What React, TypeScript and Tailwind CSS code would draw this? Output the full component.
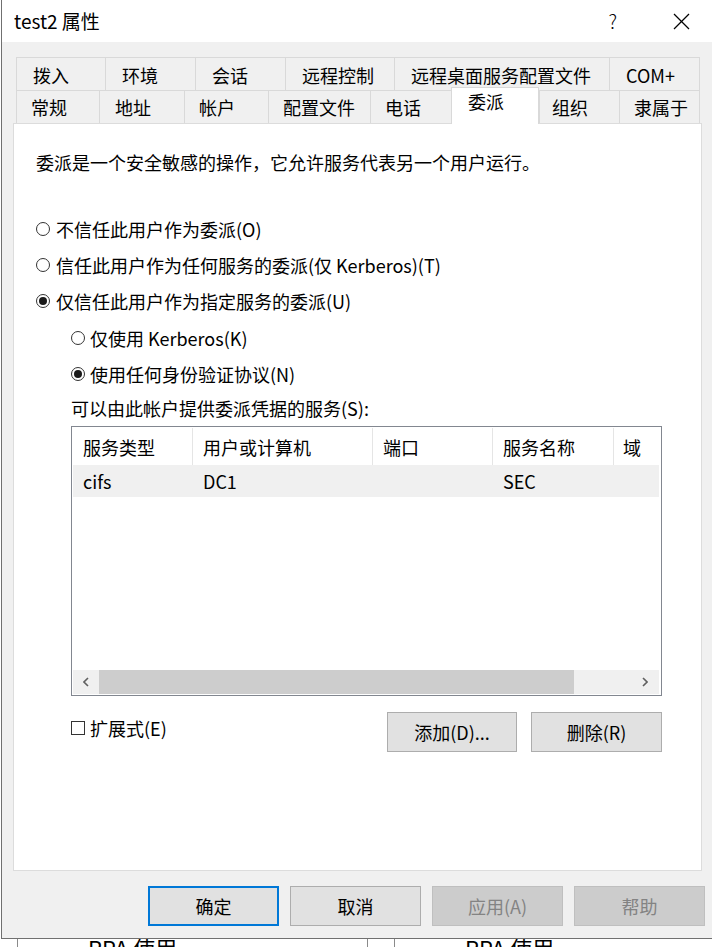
import React from "react";

const font = "font-['Noto_Sans_CJK_SC','Microsoft_YaHei',sans-serif]";

const topTabs = [
  { label: "拨入", w: "w-[89px]" },
  { label: "环境", w: "w-[90px]" },
  { label: "会话", w: "w-[90px]" },
  { label: "远程控制", w: "w-[109px]" },
  { label: "远程桌面服务配置文件", w: "w-[215px]" },
  { label: "COM+", w: "w-[91px]" },
];

const bottomTabs = [
  { label: "常规", w: "w-[83px]", pl: "pl-[14px]" },
  { label: "地址", w: "w-[85px]", pl: "pl-[15px]" },
  { label: "帐户", w: "w-[84px]", pl: "pl-[14px]" },
  { label: "配置文件", w: "w-[102px]", pl: "pl-[14px]" },
  { label: "电话", w: "w-[81px]", pl: "pl-[14px]" },
  { label: "委派", w: "w-[88px]", pl: "pl-[16px]", active: true },
  { label: "组织", w: "w-[80px]", pl: "pl-[12px]" },
  { label: "隶属于", w: "w-[81px]", pl: "pl-[14px]" },
];

function Radio({ checked }: { checked?: boolean }) {
  return (
    <span className="flex h-[14px] w-[14px] shrink-0 items-center justify-center rounded-full border border-[#333333] bg-white">
      {checked && <span className="h-[8px] w-[8px] rounded-full bg-[#1a1a1a]" />}
    </span>
  );
}

function Chevron({ dir }: { dir: "left" | "right" }) {
  return (
    <svg width="6" height="10" viewBox="0 0 6 10">
      <polyline
        points={dir === "left" ? "5,1 1,5 5,9" : "1,1 5,5 1,9"}
        fill="none"
        stroke="#606060"
        strokeWidth="1.6"
      />
    </svg>
  );
}

export default function App() {
  return (
    <div className={`h-[947px] w-[712px] overflow-hidden bg-white text-[18px] text-black ${font}`}>
      <div className="ml-px flex h-[939px] flex-col border-b border-l border-[#707070]">
        {/* title bar */}
        <div className="flex h-[42px] shrink-0 items-center bg-white pl-[12px] pr-[22px]">
          <span className="text-[19px] leading-[24px]">test2 属性</span>
          <span className="ml-auto text-[19px] font-light leading-[24px]">?</span>
          <svg className="ml-[56px]" width="17" height="17" viewBox="0 0 17 17">
            <line x1="1" y1="1" x2="16" y2="16" stroke="#000" strokeWidth="1.2" />
            <line x1="16" y1="1" x2="1" y2="16" stroke="#000" strokeWidth="1.2" />
          </svg>
        </div>

        <div className="flex flex-1 flex-col bg-[#f0f0f0] pt-[15px]">
          <div className="ml-[11px] w-[689px]">
            {/* tabs */}
            <div className="ml-[3px] w-[684px]">
              <div className="flex h-[33px]">
                {topTabs.map((t, i) => (
                  <div
                    key={t.label}
                    className={`${t.w} flex items-center border-l border-t border-[#d9d9d9] pl-[16px] pt-px leading-[24px] ${
                      i === topTabs.length - 1 ? "border-r" : ""
                    }`}
                  >
                    {t.label}
                  </div>
                ))}
              </div>
              <div className="flex h-[33px] items-end">
                {bottomTabs.map((t, i) =>
                  t.active ? (
                    <div
                      key={t.label}
                      className={`${t.w} ${t.pl} relative z-10 -mb-px flex h-[37px] items-start border-x border-t border-[#d9d9d9] bg-white pt-[1px] leading-[24px]`}
                    >
                      {t.label}
                    </div>
                  ) : (
                    <div
                      key={t.label}
                      className={`${t.w} ${t.pl} flex h-[33px] items-center border-l border-t border-[#d9d9d9] leading-[24px] ${
                        i === bottomTabs.length - 1 ? "border-r" : ""
                      }`}
                    >
                      {t.label}
                    </div>
                  )
                )}
              </div>
            </div>

            {/* panel */}
            <div className="h-[748px] border border-[#dcdcdc] bg-white pl-[22px] pt-[26px]">
              <div className="leading-[24px]">委派是一个安全敏感的操作，它允许服务代表另一个用户运行。</div>

              <div className="mt-[36px] flex flex-col">
                <div className="flex h-[37px] items-center gap-[6px] leading-[24px]">
                  <Radio />
                  <span>不信任此用户作为委派(O)</span>
                </div>
                <div className="flex h-[36px] items-center gap-[6px] leading-[24px]">
                  <Radio />
                  <span>信任此用户作为任何服务的委派(仅 Kerberos)(T)</span>
                </div>
                <div className="flex h-[36px] items-center gap-[6px] leading-[24px]">
                  <Radio checked />
                  <span>仅信任此用户作为指定服务的委派(U)</span>
                </div>
                <div className="ml-[35px] flex h-[37px] items-center gap-[5px] leading-[24px]">
                  <Radio />
                  <span>仅使用 Kerberos(K)</span>
                </div>
                <div className="ml-[35px] flex h-[36px] items-center gap-[5px] leading-[24px]">
                  <Radio checked />
                  <span>使用任何身份验证协议(N)</span>
                </div>
              </div>

              <div className="ml-[35px] w-[591px]">
                <div className="flex h-[34px] items-center pb-[2px] leading-[24px]">可以由此帐户提供委派凭据的服务(S):</div>

                {/* service list */}
                <div className="flex h-[270px] flex-col border border-[#828790] p-px">
                  <div className="flex h-[37px] shrink-0 overflow-hidden leading-[24px]">
                    <div className="flex w-[120px] shrink-0 items-center border-r border-[#e5e5e5] pl-[10px]">服务类型</div>
                    <div className="flex w-[180px] shrink-0 items-center border-r border-[#e5e5e5] pl-[10px]">用户或计算机</div>
                    <div className="flex w-[120px] shrink-0 items-center border-r border-[#e5e5e5] pl-[10px]">端口</div>
                    <div className="flex w-[121px] shrink-0 items-center border-r border-[#e5e5e5] pl-[10px]">服务名称</div>
                    <div className="flex flex-1 items-center pl-[9px]">域</div>
                  </div>
                  <div className="mr-px flex h-[32px] shrink-0 bg-[#f0f0f0] leading-[24px]">
                    <div className="flex w-[120px] shrink-0 items-center pl-[10px]">cifs</div>
                    <div className="flex w-[180px] shrink-0 items-center pl-[10px]">DC1</div>
                    <div className="flex w-[120px] shrink-0 items-center pl-[10px]"></div>
                    <div className="flex w-[121px] shrink-0 items-center pl-[10px]">SEC</div>
                  </div>
                  <div className="flex-1" />
                  <div className="mr-px flex h-[24px] shrink-0 bg-[#f0f0f0]">
                    <div className="flex w-[26px] items-center justify-center">
                      <Chevron dir="left" />
                    </div>
                    <div className="w-[475px] bg-[#cdcdcd]" />
                    <div className="flex-1" />
                    <div className="flex w-[28px] items-center justify-center">
                      <Chevron dir="right" />
                    </div>
                  </div>
                </div>

                <div className="mt-[16px] flex items-start justify-between">
                  <label className="mt-[4px] flex h-[24px] items-center gap-[5px] leading-[24px]">
                    <span className="h-[14px] w-[14px] border border-[#333333] bg-white" />
                    <span>扩展式(E)</span>
                  </label>
                  <div className="flex gap-[14px]">
                    <button className="h-[40px] w-[130px] border border-[#adadad] bg-[#e1e1e1] leading-[24px]">添加(D)...</button>
                    <button className="h-[40px] w-[131px] border border-[#adadad] bg-[#e1e1e1] leading-[24px]">删除(R)</button>
                  </div>
                </div>
              </div>
            </div>
          </div>

          {/* dialog buttons */}
          <div className="ml-[146px] mt-[15px] flex gap-[11px]">
            <button className="h-[40px] w-[131px] border-2 border-[#0078d7] bg-[#e1e1e1] leading-[24px]">确定</button>
            <button className="h-[40px] w-[131px] border border-[#adadad] bg-[#e1e1e1] leading-[24px]">取消</button>
            <button className="h-[40px] w-[131px] border border-[#bfbfbf] bg-[#cccccc] leading-[24px] text-[#838383]">应用(A)</button>
            <button className="h-[40px] w-[131px] border border-[#bfbfbf] bg-[#cccccc] leading-[24px] text-[#838383]">帮助</button>
          </div>
        </div>
      </div>

      {/* window behind */}
      <div className="flex h-[8px] overflow-hidden">
        <div className="ml-[17px] w-[351px] border-l border-r border-[#8a8a8a] pl-[70px]">
          <span className="-mt-[3px] block text-[22px] leading-[22px]">RPA 使用</span>
        </div>
        <div className="ml-[26px] flex-1 border-l border-[#8a8a8a] pl-[70px]">
          <span className="-mt-[3px] block text-[22px] leading-[22px]">RPA 使用</span>
        </div>
      </div>
    </div>
  );
}
